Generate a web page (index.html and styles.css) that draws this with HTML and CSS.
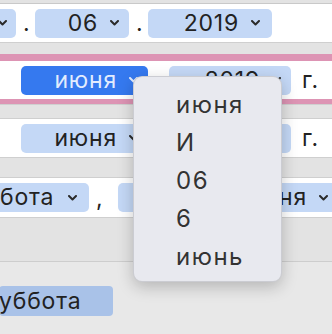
FILE: index.html
```html
<!DOCTYPE html>
<html lang="ru">
<head>
<meta charset="utf-8">
<title>Date format picker</title>
<link rel="stylesheet" href="styles.css">
</head>
<body>
<div class="page">
  <div class="band band-top"></div>
  <div class="row row-1">
    <span class="pill pill-cut"><svg class="chev" viewBox="0 0 9 6"><polyline points="1,1 4.5,4.5 8,1"/></svg></span>
    <span class="sep">.</span>
    <span class="pill pill-day">06<svg class="chev" viewBox="0 0 9 6"><polyline points="1,1 4.5,4.5 8,1"/></svg></span>
    <span class="sep">.</span>
    <span class="pill pill-year">2019<svg class="chev" viewBox="0 0 9 6"><polyline points="1,1 4.5,4.5 8,1"/></svg></span>
  </div>
  <div class="band band-a"></div>
  <div class="pink"></div>
  <div class="row row-2">
    <span class="pill pill-month selected">июня<svg class="chev" viewBox="0 0 9 6"><polyline points="1,1 4.5,4.5 8,1"/></svg></span>
    <span class="space"></span>
    <span class="pill pill-year2">2019<svg class="chev" viewBox="0 0 9 6"><polyline points="1,1 4.5,4.5 8,1"/></svg></span>
    <span class="suffix">г.</span>
  </div>
  <div class="pink pink-b"></div>
  <div class="band band-b"></div>
  <div class="row row-3">
    <span class="pill pill-month">июня<svg class="chev" viewBox="0 0 9 6"><polyline points="1,1 4.5,4.5 8,1"/></svg></span>
    <span class="space"></span>
    <span class="pill pill-year2">2019<svg class="chev" viewBox="0 0 9 6"><polyline points="1,1 4.5,4.5 8,1"/></svg></span>
    <span class="suffix">г.</span>
  </div>
  <div class="band band-c"></div>
  <div class="row row-4">
    <span class="pill pill-weekday">бота<svg class="chev" viewBox="0 0 9 6"><polyline points="1,1 4.5,4.5 8,1"/></svg></span>
    <span class="sep sep-comma">,</span>
    <span class="pill pill-long">июня<svg class="chev" viewBox="0 0 9 6"><polyline points="1,1 4.5,4.5 8,1"/></svg></span>
  </div>
  <div class="band band-d"></div>
  <div class="bottom">
    <span class="highlight">уббота</span>
  </div>

  <div class="popup">
    <div class="popup-item">июня</div>
    <div class="popup-item">И</div>
    <div class="popup-item">06</div>
    <div class="popup-item">6</div>
    <div class="popup-item">июнь</div>
  </div>
</div>
</body>
</html>
```
FILE: styles.css
```css
html, body {
  margin: 0;
  padding: 0;
}
body {
  width: 332px;
  height: 334px;
  overflow: hidden;
  background: #e3e3e3;
  font-family: Inter, "Noto Sans", "Liberation Sans", sans-serif;
  color: #222;
}
.page {
  position: relative;
  width: 332px;
  height: 334px;
  overflow: hidden;
  display: flex;
  flex-direction: column;
}
.band {
  flex: none;
  background: #e3e3e3;
}
.band-top {
  height: 3px;
  border-bottom: 1px solid #c9c9c9;
}
.band-a {
  height: 11px;
  border-top: 1px solid #cfcfcf;
}
.band-b {
  height: 13px;
  border-top: 1px solid #cfcfcf;
  border-bottom: 1px solid #cfcfcf;
}
.band-c {
  height: 19px;
  border-top: 1px solid #cfcfcf;
  border-bottom: 1px solid #cfcfcf;
}
.band-d {
  height: 43px;
  border-top: 1px solid #cfcfcf;
  border-bottom: 1px solid #cdcdcd;
}
.pink {
  flex: none;
  height: 7px;
  background: #dd94b4;
}
.pink-b {
  height: 5px;
}
.row {
  flex: none;
  height: 38px;
  background: #fff;
  display: flex;
  align-items: center;
  white-space: nowrap;
  font-size: 23px;
  letter-spacing: 0.8px;
  line-height: 1;
}
.row-2, .row-3 {
  padding-left: 21px;
}
.row-4 {
  height: 39px;
}
.pill {
  flex: none;
  height: 29px;
  box-sizing: border-box;
  display: inline-flex;
  align-items: center;
  justify-content: flex-end;
  gap: 12px;
  padding-right: 10px;
  border-radius: 5px;
  background: #c4d8f6;
  color: #222;
}
.chev {
  width: 9px;
  height: 6px;
  flex: none;
  fill: none;
  stroke: #2a2a2a;
  stroke-width: 2;
  stroke-linecap: round;
  stroke-linejoin: round;
}
.pill-cut {
  width: 40px;
  margin-left: -24px;
  padding-right: 9px;
}
.pill-day {
  width: 94px;
}
.pill-year {
  width: 124px;
  padding-right: 12px;
}
.pill-month {
  width: 127px;
}
.pill-year2 {
  width: 122px;
}
.pill-weekday {
  width: 100px;
  margin-left: -11px;
  justify-content: flex-start;
  padding-left: 11px;
  gap: 14px;
}
.pill-long {
  width: 220px;
}
.selected {
  background: #3579ef;
  color: #e2ecfe;
}
.selected .chev {
  stroke: #e2ecfe;
}
.sep {
  flex: none;
  width: 19px;
  box-sizing: border-box;
  padding-left: 7px;
  align-self: flex-end;
  padding-bottom: 7px;
}
.sep-comma {
  width: 29px;
  padding-left: 7px;
}
.space {
  flex: none;
  width: 21px;
}
.suffix {
  flex: none;
  margin-left: 11px;
}
.bottom {
  flex: 1;
  background: #e8e8e8;
  padding-top: 24px;
}
.highlight {
  display: block;
  width: 114px;
  height: 30px;
  box-sizing: border-box;
  margin-left: -1px;
  border-radius: 4px;
  background: #a9c2e8;
  font-size: 23px;
  letter-spacing: 0.8px;
  line-height: 30px;
  color: #222;
}
.popup {
  position: absolute;
  left: 133px;
  top: 76px;
  width: 149px;
  height: 206px;
  box-sizing: border-box;
  padding: 9px 0 0 42px;
  background: #e8e9ef;
  border: 0.5px solid rgba(0, 0, 0, 0.12);
  border-radius: 9px;
  box-shadow: 0 5px 16px rgba(0, 0, 0, 0.22);
  font-size: 24px;
  letter-spacing: 1.5px;
  line-height: 38px;
  color: #333;
}
.popup-item {
  height: 38px;
}
```
